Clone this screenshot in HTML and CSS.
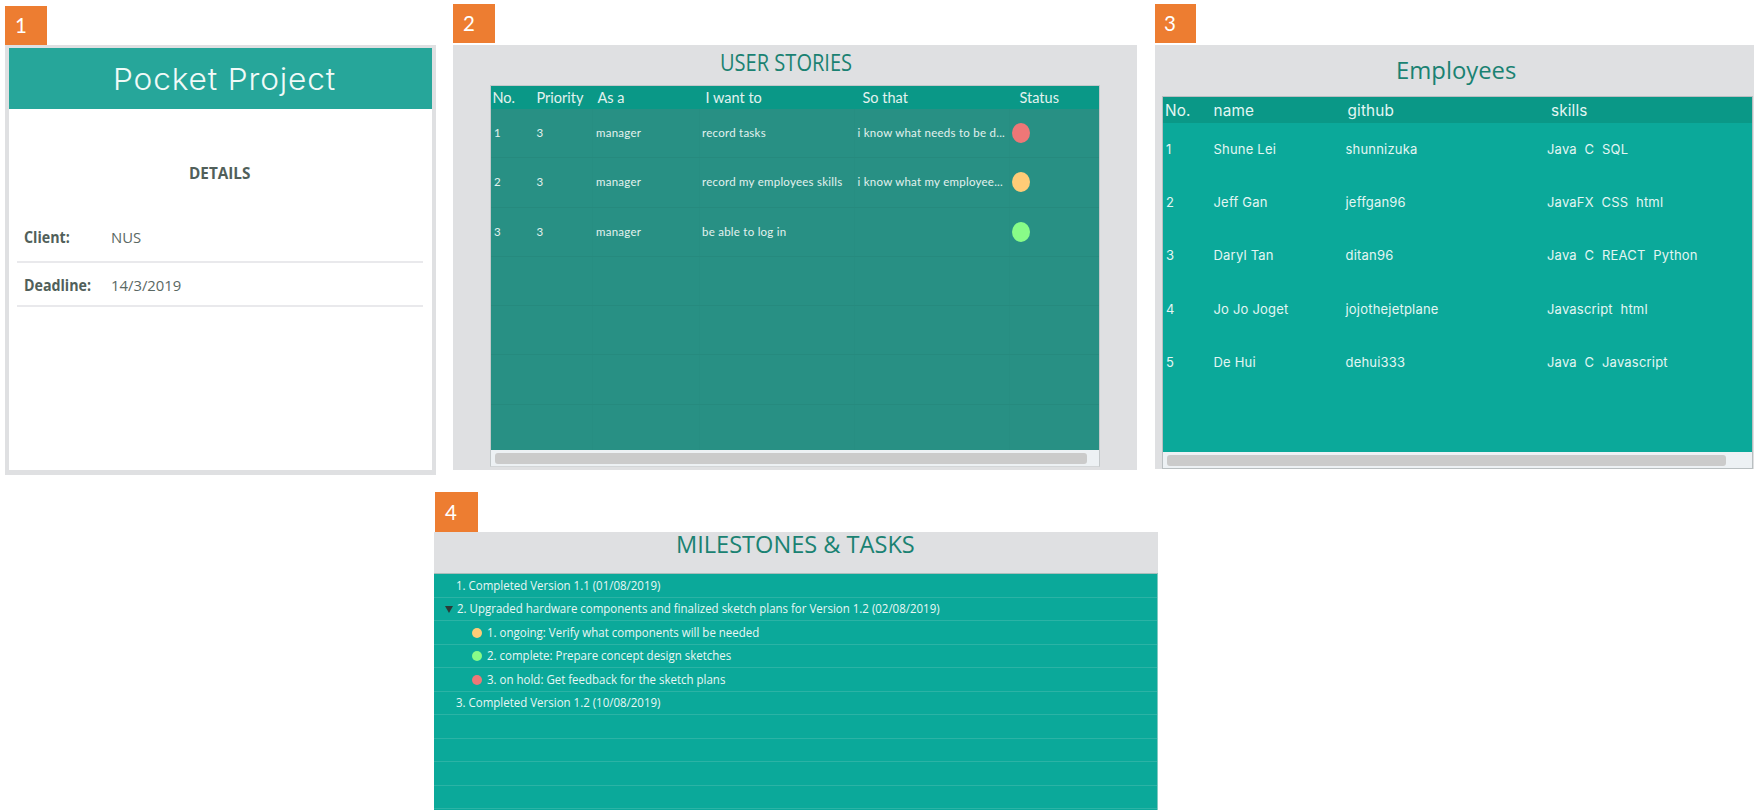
FILE: index.html
```html
<!DOCTYPE html>
<html lang="en">
<head>
<meta charset="utf-8">
<title>Pocket Project</title>
<link rel="stylesheet" href="styles.css">
</head>
<body>
<main class="board">
  <section class="card card-project">
    <div class="tab">1</div>
    <div class="project">
      <h1 class="project-name"><span class="t">Pocket Project</span></h1>
      <h2 class="details"><span class="t">DETAILS</span></h2>
      <div class="fact fact-client"><b><span class="t">Client:</span></b><span class="t">NUS</span></div>
      <div class="fact fact-deadline"><b><span class="t">Deadline:</span></b><span class="t">14/3/2019</span></div>
    </div>
  </section>

  <section class="card card-stories">
    <div class="tab">2</div>
    <div class="stories">
      <h2 class="stories-title"><span class="t">USER STORIES</span></h2>
      <div class="stories-table">
        <div class="srow shead"><span class="t">No.</span><span class="t">Priority</span><span class="t">As a</span><span class="t">I want to</span><span class="t">So that</span><span class="t">Status</span></div>
        <div class="srow"><span class="t">1</span><span class="t">3</span><span class="t">manager</span><span class="t">record tasks</span><span class="t">i know what needs to be d...</span><i class="dot red"></i></div>
        <div class="srow"><span class="t">2</span><span class="t">3</span><span class="t">manager</span><span class="t">record my employees skills</span><span class="t">i know what my employee...</span><i class="dot amber"></i></div>
        <div class="srow"><span class="t">3</span><span class="t">3</span><span class="t">manager</span><span class="t">be able to log in</span><span></span><i class="dot green"></i></div>
        <div class="srow"></div>
        <div class="srow"></div>
        <div class="srow"></div>
        <div class="srow"></div>
        <div class="scroll"><div class="thumb"></div></div>
      </div>
    </div>
  </section>

  <section class="card card-employees">
    <div class="tab">3</div>
    <div class="employees">
      <h2 class="employees-title"><span class="t">Employees</span></h2>
      <div class="employees-table">
        <div class="erow ehead"><span class="t">No.</span><span class="t">name</span><span class="t">github</span><span class="t">skills</span></div>
        <div class="erow"><span class="t">1</span><span class="t">Shune Lei</span><span class="t">shunnizuka</span><span class="t">Java  C  SQL</span></div>
        <div class="erow"><span class="t">2</span><span class="t">Jeff Gan</span><span class="t">jeffgan96</span><span class="t">JavaFX  CSS  html</span></div>
        <div class="erow"><span class="t">3</span><span class="t">Daryl Tan</span><span class="t">ditan96</span><span class="t">Java  C  REACT  Python</span></div>
        <div class="erow"><span class="t">4</span><span class="t">Jo Jo Joget</span><span class="t">jojothejetplane</span><span class="t">Javascript  html</span></div>
        <div class="erow"><span class="t">5</span><span class="t">De Hui</span><span class="t">dehui333</span><span class="t">Java  C  Javascript</span></div>
        <div class="scroll"><div class="thumb"></div></div>
      </div>
    </div>
  </section>

  <section class="card card-milestones">
    <div class="tab">4</div>
    <div class="milestones">
      <h2 class="milestones-title"><span class="t">MILESTONES &amp; TASKS</span></h2>
      <ul class="tree">
        <li><span class="t">1. Completed Version 1.1 (01/08/2019)</span></li>
        <li class="open"><svg class="arrow" viewBox="0 0 8 7"><path d="M0 0h8L4 7z"/></svg><span class="t">2. Upgraded hardware components and finalized sketch plans for Version 1.2 (02/08/2019)</span></li>
        <li class="task"><i class="pip amber"></i><span class="t">1. ongoing: Verify what components will be needed</span></li>
        <li class="task"><i class="pip green"></i><span class="t">2. complete: Prepare concept design sketches</span></li>
        <li class="task"><i class="pip red"></i><span class="t">3. on hold: Get feedback for the sketch plans</span></li>
        <li><span class="t">3. Completed Version 1.2 (10/08/2019)</span></li>
        <li></li><li></li><li></li><li></li>
      </ul>
    </div>
  </section>
</main>
</body>
</html>
```
FILE: styles.css
```css
* { box-sizing: border-box; }
body { margin: 0; background: #fff; font-family: "Open Sans", "Noto Sans", sans-serif; }
h1, h2, ul { margin: 0; padding: 0; font-weight: 400; list-style: none; }

.board {
  display: grid;
  grid-template-columns: 431px 684px 600px;
  column-gap: 17px;
  padding-left: 5px;
  width: 1755px;
  height: 811px;
  overflow: hidden;
  align-content: start;
}
.card-project { padding-top: 6px; }
.card-stories, .card-employees { padding-top: 4px; }
.card-employees { margin-left: 1px; }
.card-milestones { grid-column: 1 / -1; margin: 17px 0 0 429px; width: 724px; }

.tab {
  width: 42px;
  height: 39px;
  padding-left: 10px;
  background: #ed7d31;
  color: #fff;
  font: 20.5px/39px Lato, sans-serif;
}
.card-stories .tab, .card-employees .tab { margin-bottom: 2px; }
.card-employees .tab { width: 41px; padding-left: 9px; }
.card-milestones .tab { width: 43px; height: 40px; margin-left: 1px; line-height: 41px; }

.t { display: inline-block; white-space: pre; transform-origin: 0 50%; }

/* Project card */
.project { height: 430px; padding: 3px 4px 5px; background: linear-gradient(#fff, #fff) 4px 3px / 423px 422px no-repeat #dfe0e2; color: #5a6863; font-size: 15.3px; }
.project-name {
  height: 61px;
  background: #26a69a;
  color: #f0faf8;
  font: 300 30px/63px Inter, sans-serif;
  letter-spacing: .8px;
  padding-left: 103.5px;
}
.project-name .t { transform: scaleX(1.055); }
.details { padding: 53px 0 0 180px; line-height: 22px; font-size: 15.3px; font-weight: 700; color: #515f5a; }
.fact { display: grid; grid-template-columns: 86.5px 1fr; align-items: center; margin: 0 9px 0 8px; padding-left: 7px; line-height: 22px; border-bottom: 2px solid #e9e9ec; }
.fact b { color: #515f5a; }
.fact b .t { transform: scaleX(.93); }
.fact > .t { transform: scaleX(.97); }
.fact-client { height: 78.5px; padding-top: 29px; }
.fact-deadline { height: 44px; padding-top: 2px; }

/* User stories */
.stories { height: 425px; padding: 0 37px 0 37px; background: #dfe0e2; }
.stories-title { height: 40px; padding-left: 229.5px; color: #1a8272; font-size: 23px; line-height: 35px; }
.stories-title .t { transform: scaleX(.872); }
.stories-table { border: 1px solid #c3c8ca; border-bottom-color: #d3d6d8; width: 610px; height: 382px; background: #289084; color: #e3f2ef; font: 11.5px Lato, sans-serif; overflow: hidden; }
.srow {
  display: grid;
  grid-template-columns: 44px 57px 107px 155.5px 155px 1fr;
  align-items: center;
  height: 49.3px;
  border-bottom: 1px solid #268a7e;
  background:
    linear-gradient(#278e82, #278e82) 101px 0 / 1px 100% no-repeat,
    linear-gradient(#278e82, #278e82) 208px 0 / 1px 100% no-repeat,
    linear-gradient(#278e82, #278e82) 363px 0 / 1px 100% no-repeat,
    linear-gradient(#278e82, #278e82) 518px 0 / 1px 100% no-repeat;
  letter-spacing: .25px;
  line-height: 16px;
}
.srow > .t:nth-child(1) { padding-left: 3px; }
.srow > .t:nth-child(2) { padding-left: 1.5px; }
.srow > .t:nth-child(3) { padding-left: 4px; }
.srow > .t:nth-child(4) { padding-left: 3px; }
.srow > .t:nth-child(5) { padding-left: 3px; }
.shead { height: 23px; background: #0a9887; border: 0; font-size: 14.5px; letter-spacing: 0; }
.shead > .t:nth-child(1) { padding-left: 1.5px; }
.shead > .t:nth-child(3) { padding-left: 5.5px; }
.shead > .t:nth-child(4) { padding-left: 6.5px; }
.shead > .t:nth-child(5) { padding-left: 8px; }
.shead > .t:nth-child(6) { padding-left: 10px; }
.srow:nth-last-child(2) { height: 45.7px; border: 0; }
.dot { width: 18px; height: 20px; margin-left: 2.5px; border-radius: 50%; }
.red { background: #ee7777; }
.amber { background: #ffcc77; }
.green { background: #88fc88; }

.scroll { height: 16px; padding: 3px 4px 2px; background: #edf1f4; }
.thumb { height: 11px; width: 592px; border-radius: 3px; background: #cbcbcb; }
.stories .scroll { padding-left: 3.5px; }

/* Employees */
.employees { height: 424px; padding-left: 7px; background: #dfe0e2; }
.employees-title { height: 51px; padding-left: 234px; color: #1a8272; font-size: 24.5px; line-height: 50px; }
.employees-title .t { transform: scaleX(.973); }
.employees-table { border: 1px solid #b9bfc1; width: 591px; height: 373px; background: #0ba99a; color: #e3f6f3; font: 13px Inter, sans-serif; overflow: hidden; }
.erow { display: grid; grid-template-columns: 47.5px 132px 201.5px 1fr; align-items: center; height: 53.2px; padding-left: 3px; letter-spacing: .2px; }
.ehead { height: 25.5px; padding-top: 2px; background: #0a9887; font-size: 15.3px; letter-spacing: .15px; }
.ehead .t:nth-child(1) { margin-left: -1px; }
.ehead .t:nth-child(3) { margin-left: 2px; }
.ehead .t:nth-child(4) { margin-left: 4px; }
.erow:nth-last-child(2) { margin-bottom: 63.5px; }
.employees .scroll { height: 17px; }
.employees .thumb { width: 559px; }

/* Milestones */
.milestones { height: 278px; background: #dfe0e2; }
.milestones-title { height: 41px; padding-left: 242px; color: #1a8272; font-size: 24px; line-height: 23px; }
.milestones-title .t { transform: scaleX(.982); }
.tree { height: 237px; background: #0ba99a; border-top: 1px solid #a9bdbb; border-right: 1px solid #7fc9c1; overflow: hidden; color: #e8f7f5; font-size: 12px; }
.tree li { display: flex; align-items: center; height: 23.5px; padding: 1px 0 0 22px; border-bottom: 1px solid #2bb3a5; line-height: 20px; }
.tree .t { transform: scaleX(.957); }
.tree .open { padding-left: 10.5px; }
.arrow { width: 8px; height: 7px; margin-right: 4.5px; fill: #2b3b38; }
.tree .task { padding-left: 38px; }
.pip { width: 10px; height: 10px; margin-right: 5px; border-radius: 50%; }
```
